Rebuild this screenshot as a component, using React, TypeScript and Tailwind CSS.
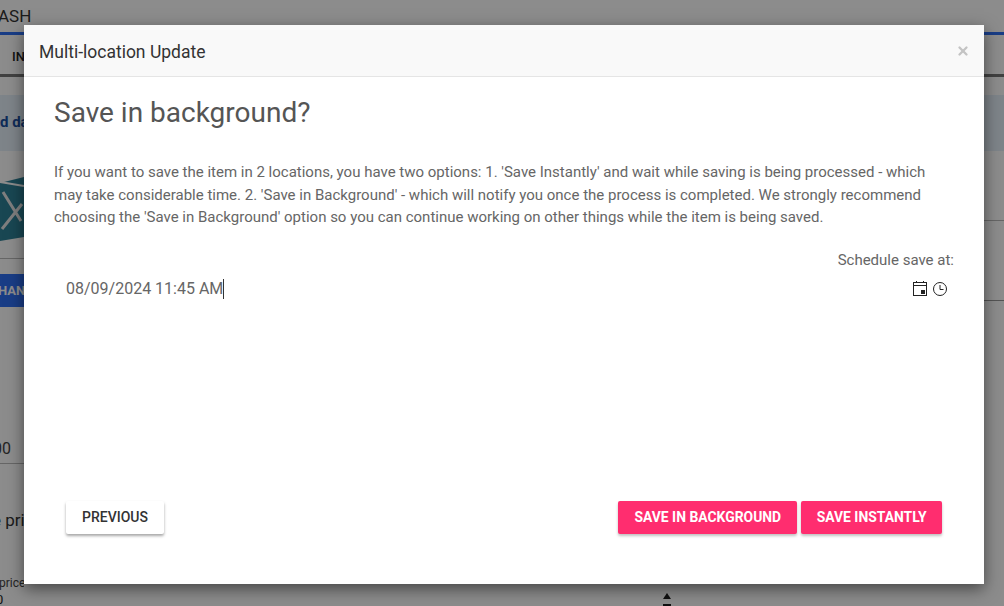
import { X } from "lucide-react";

const App = () => {
  return (
    <div className="relative h-[606px] w-[1004px] overflow-hidden bg-white font-['Roboto',sans-serif]">
      {/* Page behind the dialog */}
      <div className="flex h-full flex-col text-[#212121]">
        <div className="h-[32px] shrink-0 pt-[5px] text-[17px] leading-[22px] text-[#333]">
          <div className="-ml-[13px]">DASH</div>
        </div>
        <div className="h-[3px] shrink-0 bg-[#2f6ff5]" />
        <div className="h-[42px] shrink-0 border-b-[3px] border-[#777] bg-white pl-[12px] pt-[12px] text-[13px] font-medium">
          IN
        </div>
        <div className="h-[18px] shrink-0" />
        <div className="h-[56px] shrink-0 bg-[#e6f0fa] pt-[17px] text-[15px] font-bold leading-[20px] text-[#1a4fa0]">
          d da
        </div>
        <div className="flex min-h-0 flex-1 justify-between">
          <div className="w-[24px] shrink-0 overflow-hidden">
            <div className="h-[108px] border-b border-[#bbb] pt-[26px]">
              <svg width="24" height="64" viewBox="0 0 24 64">
                <path d="M0 6 24 0V60L0 64Z" fill="#2f8197" />
                <path d="M0 5 24 9" stroke="#fff" strokeWidth="2" />
                <path d="M3 15 21 44M22 27 2 52" stroke="#e8e8e8" strokeWidth="3" />
              </svg>
            </div>
            <div className="mt-[15px] flex h-[33px] items-center bg-[#2f6ff5] text-[13px] font-bold whitespace-nowrap text-white">
              <span className="-ml-[2px]">HAN</span>
            </div>
            <div className="mt-[132px] -ml-[16px] h-[20px] text-[16px] leading-[20px] text-[#444]">000</div>
            <div className="h-[5px] border-b border-[#bbb]" />
            <div className="mt-[46px] -ml-[8px] text-[17px] leading-[20px] whitespace-nowrap text-[#333]">e pri</div>
            <div className="mt-[46px] -ml-[1px] text-[12px] leading-[14px] text-[#444]">price</div>
            <div className="mt-[3px] -ml-[4px] text-[13px] leading-[14px]">0</div>
          </div>
          <div className="w-[20px] shrink-0">
            <div className="h-[70px] border-b border-[#bbb]" />
            <div className="h-[80px] border-b border-[#999]" />
          </div>
        </div>
      </div>

      {/* Backdrop */}
      <div className="absolute inset-0 bg-black/45" />

      {/* Little sort arrow showing under the dialog */}
      <div className="absolute left-[663px] top-[593px] h-0 w-0 border-x-[4px] border-b-[6px] border-x-transparent border-b-[#111]" />
      <div className="absolute left-[663px] top-[604px] h-[2px] w-[8px] bg-[#111]" />

      {/* Dialog */}
      <div className="absolute left-[24px] top-[25px] flex h-[559px] w-[960px] flex-col bg-white shadow-[0_5px_15px_rgba(0,0,0,0.5)]">
        <div className="flex h-[52px] items-center justify-between border-b border-[#e5e5e5] bg-[#f9f9f9] pl-[15px] pr-[14px] pt-[3px] text-[17.5px] text-[#333]">
          <span>Multi-location Update</span>
          <X className="-mt-[3px] h-[14px] w-[14px] text-[#c4c4c4]" strokeWidth={4} />
        </div>
        <div className="flex flex-1 flex-col px-[30px] pt-[19px]">
          <h2 className="text-[28px] leading-[34px] text-[#555]">Save in background?</h2>
          <p className="mt-[31px] text-[15px] leading-[22.5px] text-[#666]">
            If you want to save the item in 2 locations, you have two options: 1. 'Save Instantly' and wait while saving is being processed - which may take considerable time. 2. 'Save in Background' - which will notify you once the process is completed. We strongly recommend choosing the 'Save in Background' option so you can continue working on other things while the item is being saved.
          </p>
          <div className="mt-[20px] text-right text-[15px] leading-[22px] text-[#666]">Schedule save at:</div>
          <div className="mt-[8px] flex items-center justify-between pl-[12px] pr-[7px]">
            <div className="border-r border-[#333] text-[16px] leading-[20px] text-[#666]">
              08/09/2024 11:45 AM
            </div>
            <div className="flex items-center gap-[6px] text-[#222]">
              <svg width="14" height="15" viewBox="0 0 14 15" fill="none" stroke="currentColor" strokeWidth="1">
                <rect x="0.5" y="1.5" width="13" height="13" />
                <path d="M0.5 4.5h13" />
                <path d="M3.5 0v2M10.5 0v2" />
                <rect x="8" y="9" width="4" height="4" fill="currentColor" stroke="none" />
              </svg>
              <svg width="14" height="14" viewBox="0 0 14 14" fill="none" stroke="currentColor" strokeWidth="1">
                <circle cx="7" cy="7" r="6.5" />
                <path d="M7 3v4.5h3.5" />
              </svg>
            </div>
          </div>
          <div className="mt-[202px] flex items-center justify-between px-[12px]">
            <button className="h-[33px] rounded-[2px] bg-white px-[16px] text-[14px] font-medium text-[#333] shadow-[0_2px_3px_rgba(0,0,0,0.35)]">
              PREVIOUS
            </button>
            <div className="flex gap-[4px]">
              <button className="h-[33px] rounded-[2px] bg-[#ff2d6f] px-[16px] text-[13.9px] font-bold text-white shadow-[0_2px_3px_rgba(0,0,0,0.25)]">
                SAVE IN BACKGROUND
              </button>
              <button className="h-[33px] rounded-[2px] bg-[#ff2d6f] px-[15.5px] text-[13.9px] font-bold text-white shadow-[0_2px_3px_rgba(0,0,0,0.25)]">
                SAVE INSTANTLY
              </button>
            </div>
          </div>
        </div>
      </div>
    </div>
  );
};

export default App;
